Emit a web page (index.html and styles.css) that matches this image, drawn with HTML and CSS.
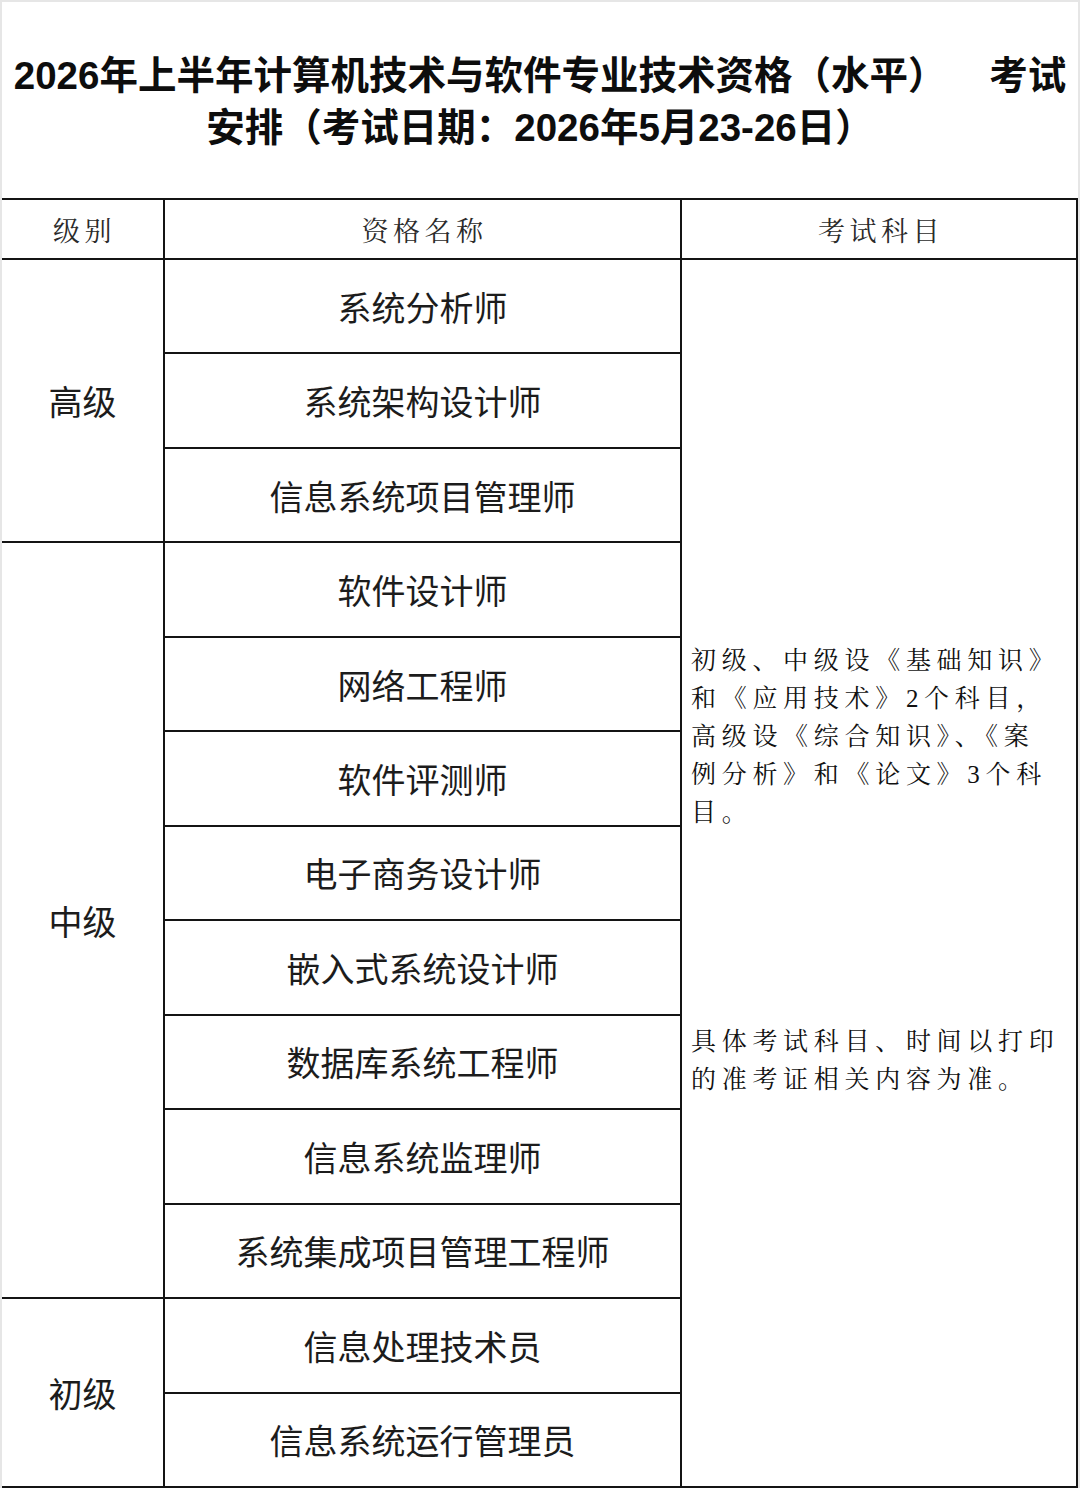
FILE: index.html
```html
<!DOCTYPE html>
<html lang="zh-CN">
<head>
<meta charset="utf-8">
<title>2026年上半年计算机技术与软件专业技术资格（水平）考试安排</title>
<link rel="stylesheet" href="styles.css">
</head>
<body>
<div class="page">
  <div class="title">
    <div class="title-inner">2026年上半年计算机技术与软件专业技术资格（水平）&nbsp;&nbsp;&nbsp;&nbsp;考试<br>安排（考试日期：2026年5月23-26日）</div>
  </div>
  <div class="grid">
    <div class="th">级别</div>
    <div class="th">资格名称</div>
    <div class="th">考试科目</div>

    <div class="level span-3">高级</div>
    <div class="name">系统分析师</div>
    <div class="subjects">
      <p>初级、中级设《基础知识》<br>和《应用技术》2个科目，<br>高级设《综合知识》、《案<br>例分析》和《论文》3个科<br>目。</p>
      <p>具体考试科目、时间以打印<br>的准考证相关内容为准。</p>
    </div>
    <div class="name">系统架构设计师</div>
    <div class="name">信息系统项目管理师</div>

    <div class="level span-8">中级</div>
    <div class="name">软件设计师</div>
    <div class="name">网络工程师</div>
    <div class="name">软件评测师</div>
    <div class="name">电子商务设计师</div>
    <div class="name">嵌入式系统设计师</div>
    <div class="name">数据库系统工程师</div>
    <div class="name">信息系统监理师</div>
    <div class="name">系统集成项目管理工程师</div>

    <div class="level span-2">初级</div>
    <div class="name">信息处理技术员</div>
    <div class="name">信息系统运行管理员</div>
  </div>
</div>
</body>
</html>
```

FILE: styles.css
```css
* {
  box-sizing: border-box;
}

html, body {
  margin: 0;
  padding: 0;
}

body {
  background: #e6e6e6;
  width: 1080px;
  height: 1488px;
  overflow: hidden;
}

.page {
  margin: 2px 2px 0 2px;
  background: #ffffff;
  width: 1076px;
}

.title {
  height: 196px;
  padding-top: 4px;
  display: flex;
  align-items: center;
  justify-content: center;
}

.title-inner {
  font-family: "Liberation Sans", "Noto Sans CJK SC", sans-serif;
  font-weight: 700;
  font-size: 38.5px;
  line-height: 52px;
  color: #0d0d0d;
  text-align: center;
  white-space: nowrap;
}

.grid {
  display: grid;
  grid-template-columns: 161px 515px 394px;
  grid-template-rows: 58px repeat(13, 1fr);
  gap: 2px;
  padding: 2px 2px 2px 0;
  height: 1290px;
  background: #141414;
}

.grid > div {
  background: #ffffff;
}

.th {
  display: flex;
  align-items: center;
  justify-content: center;
  font-family: "Liberation Serif", "Noto Serif CJK SC", "Noto Sans CJK SC", serif;
  font-size: 27px;
  letter-spacing: 4.5px;
  color: #2a2a2a;
  padding-left: 4px;
}

.level,
.name {
  display: flex;
  align-items: center;
  justify-content: center;
  font-family: "Noto Sans CJK SC", sans-serif;
  font-size: 34px;
  color: #1c1c1c;
}

.span-3 { grid-row: span 3; }
.span-8 { grid-row: span 8; }
.span-2 { grid-row: span 2; }

.subjects {
  grid-row: span 13;
  display: flex;
  flex-direction: column;
  justify-content: center;
  gap: 191px;
  padding: 0 4px 6px 9px;
  font-family: "Liberation Serif", "Noto Serif CJK SC", "Noto Sans CJK SC", serif;
  font-size: 25px;
  letter-spacing: 5.7px;
  line-height: 38px;
  color: #111111;
}

.subjects p {
  margin: 0;
  white-space: nowrap;
}
```
